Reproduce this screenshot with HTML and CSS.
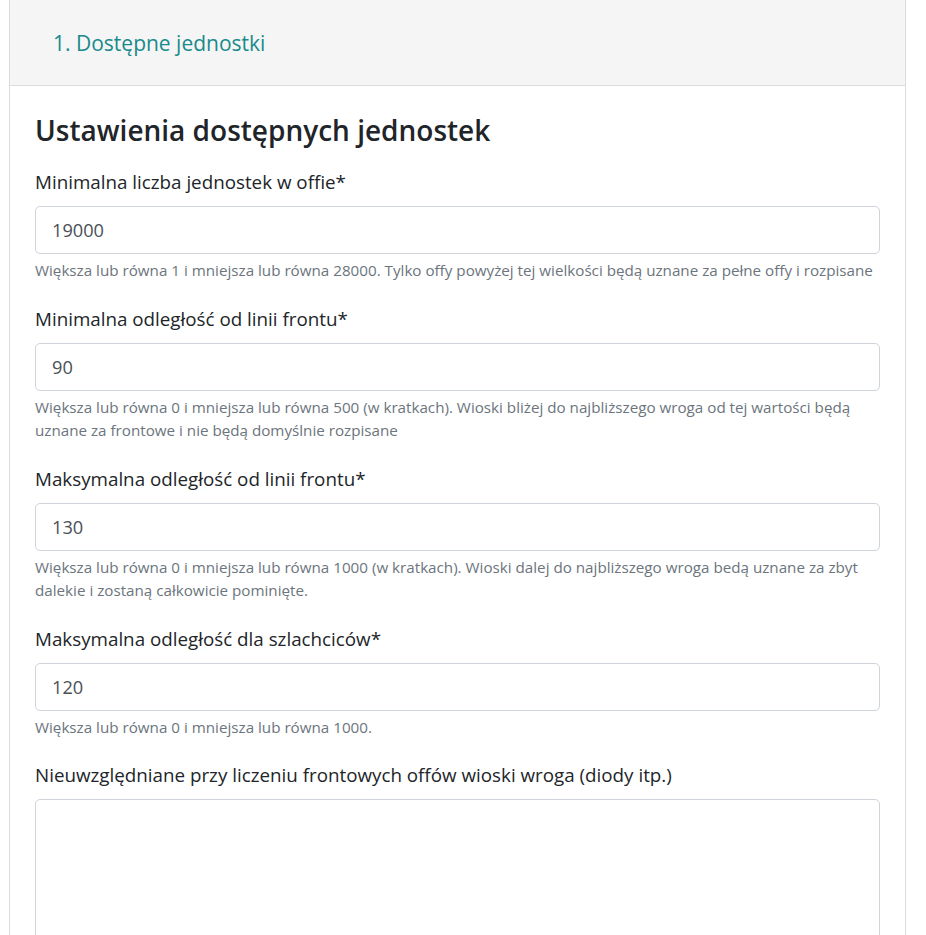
FILE: index.html
```html
<!DOCTYPE html>
<html lang="pl">
<head>
<meta charset="utf-8">
<title>Dostępne jednostki</title>
<link rel="stylesheet" href="styles.css">
</head>
<body>
<div class="page">
  <div class="card">
    <div class="card-header">1. Dostępne jednostki</div>
    <div class="card-body">
      <h2 class="title">Ustawienia dostępnych jednostek</h2>
      <div class="group">
        <label class="label">Minimalna liczba jednostek w offie*</label>
        <input class="field" type="text" value="19000">
        <div class="help">Większa lub równa 1 i mniejsza lub równa 28000. Tylko offy powyżej tej wielkości będą uznane za pełne offy i rozpisane</div>
      </div>
      <div class="group">
        <label class="label">Minimalna odległość od linii frontu*</label>
        <input class="field" type="text" value="90">
        <div class="help">Większa lub równa 0 i mniejsza lub równa 500 (w kratkach). Wioski bliżej do najbliższego wroga od tej wartości będą uznane za frontowe i nie będą domyślnie rozpisane</div>
      </div>
      <div class="group">
        <label class="label">Maksymalna odległość od linii frontu*</label>
        <input class="field" type="text" value="130">
        <div class="help">Większa lub równa 0 i mniejsza lub równa 1000 (w kratkach). Wioski dalej do najbliższego wroga bedą uznane za zbyt dalekie i zostaną całkowicie pominięte.</div>
      </div>
      <div class="group">
        <label class="label">Maksymalna odległość dla szlachciców*</label>
        <input class="field" type="text" value="120">
        <div class="help">Większa lub równa 0 i mniejsza lub równa 1000.</div>
      </div>
      <div class="group">
        <label class="label">Nieuwzględniane przy liczeniu frontowych offów wioski wroga (diody itp.)</label>
        <textarea class="area"></textarea>
      </div>
    </div>
  </div>
</div>
</body>
</html>
```
FILE: styles.css
```css
* { box-sizing: border-box; }
html, body { margin: 0; padding: 0; background: #fff; }
body {
  font-family: "Open Sans", "Noto Sans", "DejaVu Sans", sans-serif;
  color: #212529;
  overflow: hidden;
  height: 935px;
}
.page {
  padding-left: 9px;
  width: 906px;
}
.card {
  border: 1px solid #dcdcdc;
  border-top: none;
  background: #fff;
}
.card-header {
  height: 86px;
  background: #f5f5f5;
  border-bottom: 1px solid #dcdcdc;
  color: #198a8c;
  font-size: 21px;
  line-height: 28px;
  padding: 29px 0 0 43px;
}
.card-body {
  padding: 28px 25px 0 25px;
}
.title {
  margin: 0 0 23px 0;
  font-size: 28px;
  line-height: 32px;
  font-weight: 600;
  color: #212529;
}
.group { margin-bottom: 23px; }
.label {
  display: block;
  font-size: 18.8px;
  line-height: 27px;
  margin-bottom: 10px;
  color: #212529;
}
.field {
  display: block;
  width: 845px;
  height: 48px;
  border: 1px solid #ced4da;
  border-radius: 5px;
  padding: 0 16px;
  font-family: inherit;
  font-size: 18.2px;
  color: #495057;
  background: #fff;
  margin: 0;
}
.help {
  margin-top: 5px;
  font-size: 15.2px;
  line-height: 23.5px;
  color: #6c757d;
  padding-right: 6px;
}
.area {
  display: block;
  width: 845px;
  height: 220px;
  border: 1px solid #ced4da;
  border-radius: 5px;
  resize: none;
  margin: 0;
  font-family: inherit;
}
```
